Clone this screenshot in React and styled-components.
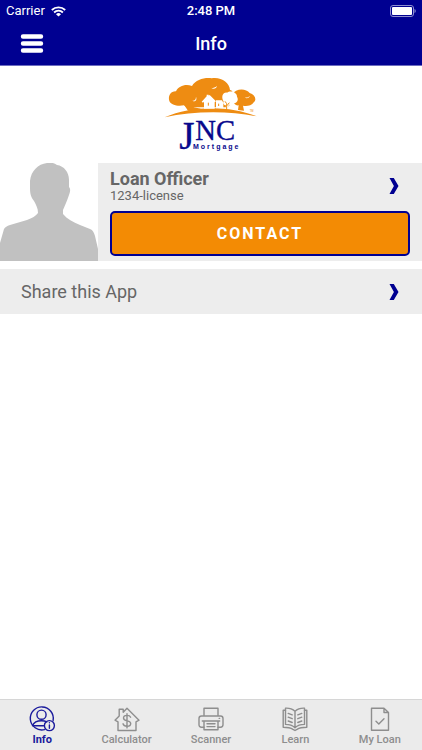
import React from "react";
import styled, { createGlobalStyle } from "styled-components";

const NAVY = "#000091";
const ORANGE = "#f38b04";

const GlobalStyle = createGlobalStyle`
  *, *::before, *::after { box-sizing: border-box; }
  body {
    margin: 0;
    background: #fff;
    font-family: Roboto, "Liberation Sans", sans-serif;
    -webkit-font-smoothing: antialiased;
  }
  button { font-family: inherit; border: 0; padding: 0; background: none; cursor: pointer; }
`;

const Screen = styled.div`
  min-height: 100vh;
  display: flex;
  flex-direction: column;
`;

const Header = styled.header`
  background: ${NAVY};
  color: #fff;
  border-bottom: 1px solid #6c6cc0;
`;

const StatusBar = styled.div`
  display: grid;
  grid-template-columns: 1fr auto 1fr;
  align-items: center;
  height: 22px;
  padding: 0 6px;
  font-size: 13px;
  line-height: 22px;
`;

const Carrier = styled.div`
  display: flex;
  align-items: center;
  gap: 6px;
`;

const Clock = styled.div`
  font-weight: 500;
`;

const Battery = styled.svg`
  justify-self: end;
`;

const NavBar = styled.div`
  display: grid;
  grid-template-columns: 1fr auto 1fr;
  align-items: center;
  height: 43px;
  padding: 0 20px;
`;

const MenuButton = styled.button`
  justify-self: start;
  display: flex;
`;

const Title = styled.h1`
  margin: 0;
  font-size: 18px;
  font-weight: 500;
  line-height: 20px;
`;

const Main = styled.main`
  flex: 1;
`;

const LogoArea = styled.div`
  display: flex;
  justify-content: center;
  padding: 4px 0;
  height: 97px;
`;

const OfficerCard = styled.section`
  display: flex;
  margin-bottom: 8px;
  background: #ededed;
`;

const Portrait = styled.svg`
  flex: none;
  display: block;
  background: #fff;
`;

const OfficerBody = styled.div`
  flex: 1;
  display: flex;
  flex-direction: column;
  justify-content: space-between;
  padding: 6px 12px 5px;
`;

const OfficerLink = styled.a`
  display: flex;
  align-items: center;
  justify-content: space-between;
  padding-right: 10px;
  color: #666;
  text-decoration: none;
`;

const OfficerName = styled.div`
  font-size: 18px;
  font-weight: 700;
  line-height: 19px;
`;

const License = styled.div`
  font-size: 13px;
  line-height: 15px;
`;

const ContactButton = styled.button`
  height: 45px;
  border: 2px solid ${NAVY};
  border-radius: 5px;
  background: ${ORANGE};
  color: #fff;
  font-size: 16px;
  font-weight: 700;
  letter-spacing: 2px;
`;

const ShareRow = styled.a`
  display: flex;
  align-items: center;
  justify-content: space-between;
  height: 45px;
  padding: 0 22px 0 21px;
  background: #ededed;
  color: #666;
  font-size: 18px;
  text-decoration: none;
`;

const TabBar = styled.nav`
  position: sticky;
  bottom: 0;
  display: grid;
  grid-template-columns: repeat(5, 1fr);
  height: 51px;
  border-top: 1px solid #d6d6d6;
  background: #ebebeb;
`;

const Tab = styled.a`
  display: flex;
  flex-direction: column;
  align-items: center;
  padding-top: 6px;
  color: ${(p) => (p.$active ? "#1a1a9c" : "#8e8e8e")};
  font-size: 11px;
  font-weight: ${(p) => (p.$active ? 700 : 500)};
  line-height: 14px;
  text-decoration: none;
`;

const TabIcon = styled.svg`
  width: 26px;
  height: 26px;
  margin-bottom: 1px;
  fill: none;
  stroke: currentColor;
  stroke-width: 1.4;
  stroke-linejoin: round;
  stroke-linecap: round;
  overflow: visible;
`;

function Chevron() {
  return (
    <svg width="12" height="18" viewBox="0 0 12 18" aria-hidden="true">
      <path d="M1.500 1H5.800L10.500 9 5.800 17H1.500L5.900 9z" fill={NAVY} />
    </svg>
  );
}

function Wifi() {
  return (
    <svg width="15" height="11" viewBox="0 0 15 11" aria-hidden="true">
      <g fill="none" stroke="#fff" strokeWidth="1.8">
        <path d="M.8 4a9.6 9.6 0 0 1 13.4 0" />
        <path d="M3.1 6.5a6.2 6.2 0 0 1 8.8 0" />
      </g>
      <path d="M7.5 10.6 5 8.2a3.6 3.6 0 0 1 5 0z" fill="#fff" />
    </svg>
  );
}

function Logo() {
  return (
    <svg width="110" height="90" viewBox="0 0 330 270" role="img" aria-label="JNC Mortgage">
      <g fill="#ee8c12">
        <path d="M40 93C35 76 46 63 60 64 68 48 88 41 108 48 119 29 146 22 167 25 195 20 220 38 222 60 229 61 232 68 230 78L218 112H112C102 115 90 112 84 106 66 110 44 105 40 93z" />
        <path d="M229 73C238 55 270 54 281 69 296 74 303 88 294 96 286 108 270 110 261 107L264 122 246 120 248 106C237 108 228 96 229 73z" />
        <path d="M84 104h20l10 8 20 4-4 7-34-1z" />
        <path d="M26 142C108 106 220 106 302 139 216 122 112 123 26 142z" />
      </g>
      <g fill="#fff">
        <path d="M137 95 152 79V74h6v3l3-2 19 19-4 3v19h-32V95l-3 3z" />
        <path d="M180 91h18l4 8v16h-22z" />
        <path d="M203 95C194 80 201 66 213 68 223 60 243 66 243 80 250 91 240 102 231 99L218 106 219 116H209L210 106C204 105 199 100 203 95z" />
        <path d="M109 92c7 1 11-4 11-12 4 11-3 17-11 12zM165 53c7 2 14-1 18-6-1 8-10 12-18 6zM266 82c6 2 12 0 15-5 0 7-9 10-15 5z" />
      </g>
      <g fill="none" stroke="#ee8c12" strokeWidth="3">
        <path d="M157 98v9M188 101v7M212 117V101L207 94M213 107 220 98" />
      </g>
      <text x="281" y="125" fontSize="8" fill="#ee8c12" fontFamily="Liberation Sans, sans-serif">TM</text>
      <g fill="#08088c" stroke="#08088c" strokeWidth="1" fontFamily="Liberation Serif, serif">
        <text x="70" y="236" fontSize="118">J</text>
        <text x="118" y="209" fontSize="86">NC</text>
      </g>
      <text x="111" y="237" fontSize="21" fontWeight="700" letterSpacing="6" fill="#08088c" fontFamily="Liberation Sans, sans-serif">Mortgage</text>
    </svg>
  );
}

const tabs = [
  {
    label: "Info",
    active: true,
    icon: (
      <>
        <path d="M15.5 23.6A11.5 11.5 0 1 1 24.1 14.5" />
        <circle cx="12.5" cy="8.7" r="4.6" />
        <path d="M3.5 19.5C5 16 9 14.7 12.5 14.7c2 0 3.8.4 5.3 1.2M3.8 19.8h10.8" />
        <circle cx="20.4" cy="19.6" r="5" />
        <path d="M20.4 19v3.200M20.400 16.700v.1" />
      </>
    ),
  },
  {
    label: "Calculator",
    icon: (
      <>
        <path d="M1 14.2 5.2 10V3.2h4v3L13 2.2 25 14.2 22 15.8V24.5H4V15.8z" />
        <path d="M16.6 11.2C16 9.8 14.6 9.4 13 9.4c-2 0-3.5 1-3.5 2.7 0 4 7.2 1.7 7.2 5.4 0 1.8-1.6 2.8-3.7 2.8-2 0-3.5-.8-4-2.5M13 7.7v14.2" />
      </>
    ),
  },
  {
    label: "Scanner",
    icon: (
      <>
        <path d="M6 10V2.2h14V10M6 21.2H3.5C1.8 21.2 1 20.3 1 18.8V12.5C1 11 2 10 3.5 10h19c1.5 0 2.5 1 2.5 2.5v6.3c0 1.5-.8 2.4-2.5 2.4H20" />
        <path d="M6 15h14v8.8H6zM4.3 15h17.4M9 17.8h8M9 20.6h8M21.2 12.4h.4" />
      </>
    ),
  },
  {
    label: "Learn",
    icon: (
      <>
        <path d="M13 5.3C10.5 3 7 2 3.5 2.2v16.2c4 0 7 1 9.5 3.3 2.5-2.3 5.5-3.3 9.5-3.3V2.2C19 2 15.5 3 13 5.3zM13 5.3v16.4" />
        <path d="M3.5 4.2H1.2v17c4 0 7 .3 9.8 2.1l2 1.2 2-1.2c2.8-1.8 5.8-2.1 9.8-2.1v-17h-2.3" />
        <path d="M6.2 7.4l4 1.5M6.2 11.2l4 1.5M6.2 15l4 1.5M19.8 7.4l-4 1.5M19.8 11.2l-4 1.5M19.8 15l-4 1.5" />
      </>
    ),
  },
  {
    label: "My Loan",
    icon: (
      <>
        <path d="M4.5 2.2H17L21.5 6.5V24.2H4.5zM17 2.2V6.5h4.5" />
        <path d="M9 15.3 11.8 18 17 12.7" />
      </>
    ),
  },
];

export default function App() {
  return (
    <Screen>
      <GlobalStyle />
      <Header>
        <StatusBar>
          <Carrier>
            Carrier
            <Wifi />
          </Carrier>
          <Clock>2:48 PM</Clock>
          <Battery width="27" height="12" viewBox="0 0 27 12" aria-label="Battery full">
            <rect x="1.5" y=".5" width="23" height="11" rx="2.5" fill="none" stroke="#8f8fd0" />
            <rect x="3" y="2" width="20" height="8" rx="1" fill="#fff" />
            <path d="M25.5 4c1.6.6 1.6 3.4 0 4z" fill="#8f8fd0" />
          </Battery>
        </StatusBar>
        <NavBar>
          <MenuButton aria-label="Menu">
            <svg width="24" height="20" viewBox="0 0 24 20" aria-hidden="true">
              <path d="M3 2.500h18M3 9.500h18M3 16.500h18" stroke="#fff" strokeWidth="4.400" strokeLinecap="round" />
            </svg>
          </MenuButton>
          <Title>Info</Title>
        </NavBar>
      </Header>

      <Main>
        <LogoArea>
          <Logo />
        </LogoArea>
        <OfficerCard>
          <Portrait width="98" height="98" viewBox="0 0 98 98" role="img" aria-label="Loan officer portrait">
            <path
              d="M0 98V80L4 66C5 64 7 63 10 62L27 57C32 55 36 53 38 50 38 45 36 42 34 38 31 34 30 31 30 25V18C31 8 38 1 47 0 51-1 54 0 57 2 64 3 69 9 69 17V24C71 26 70 29 69 32 67 38 65 42 63 47V51C67 56 73 59 80 62L90 66C93 67 94 70 95 73L98 86V98z"
              fill="#c1c1c1"
            />
          </Portrait>
          <OfficerBody>
            <OfficerLink href="#officer">
              <div>
                <OfficerName>Loan Officer</OfficerName>
                <License>1234-license</License>
              </div>
              <Chevron />
            </OfficerLink>
            <ContactButton>CONTACT</ContactButton>
          </OfficerBody>
        </OfficerCard>
        <ShareRow href="#share">
          Share this App
          <Chevron />
        </ShareRow>
      </Main>

      <TabBar>
        {tabs.map((tab) => (
          <Tab key={tab.label} href={`#${tab.label}`} $active={tab.active}>
            <TabIcon viewBox="0 0 26 26" aria-hidden="true">
              {tab.icon}
            </TabIcon>
            {tab.label}
          </Tab>
        ))}
      </TabBar>
    </Screen>
  );
}
